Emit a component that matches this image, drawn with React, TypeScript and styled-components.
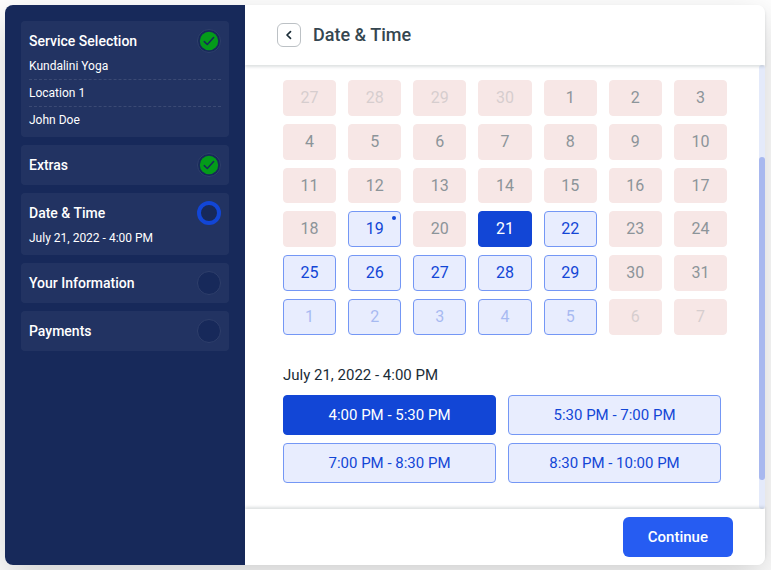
import React from "react";
import styled, { createGlobalStyle, css } from "styled-components";

const navy = "#17295a";
const primary = "#1246d6";

const GlobalStyle = createGlobalStyle`
  *, *::before, *::after { box-sizing: border-box; }
  body {
    margin: 0;
    background: #ffffff;
    font-family: Roboto, "Liberation Sans", sans-serif;
  }
  button { font-family: inherit; margin: 0; cursor: pointer; }
  h1, h2, p, ul { margin: 0; padding: 0; }
`;

const Page = styled.div`
  min-height: 100vh;
  display: flex;
  padding: 5px 6px 5px 5px;
  overflow: hidden;
`;

const Dialog = styled.main`
  flex: 1;
  min-width: 0;
  display: flex;
  border-radius: 8px;
  background: #ffffff;
  box-shadow: 0 14px 40px rgba(0, 0, 0, 0.19);
`;

const Sidebar = styled.nav`
  flex: 0 0 240px;
  display: flex;
  flex-direction: column;
  gap: 8px;
  padding: 16px;
  border-radius: 8px 0 0 8px;
  background: ${navy};
  color: #ffffff;
`;

const StepCard = styled.section<{ $detailed: boolean }>`
  padding: ${(p) => (p.$detailed ? "8px 8px 4px" : "8px")};
  border-radius: 4px;
  background: rgba(255, 255, 255, 0.05);
`;

const StepHeader = styled.div`
  display: flex;
  align-items: center;
  justify-content: space-between;
  height: 24px;
`;

const StepTitle = styled.h2`
  font-size: 14px;
  line-height: 24px;
  font-weight: 500;
`;

const StepDetails = styled.ul`
  list-style: none;
`;

const StepDetail = styled.li`
  font-size: 12px;
  line-height: 26px;

  &:not(:last-child) {
    border-bottom: 1px dashed #3b4a74;
  }
`;

type StepState = "done" | "current" | "pending";

const StateCircle = styled.span<{ $state: StepState }>`
  display: flex;
  align-items: center;
  justify-content: center;
  width: 24px;
  height: 24px;
  border-radius: 50%;
  background: ${navy};
  border: ${(p) => (p.$state === "current" ? `4px solid ${primary}` : "1px solid #2f3f6b")};
`;

const Content = styled.div`
  flex: 1;
  min-width: 0;
  display: flex;
  flex-direction: column;
`;

const Header = styled.header`
  z-index: 1;
  display: flex;
  align-items: center;
  gap: 12px;
  height: 60px;
  padding: 0 32px;
  border-radius: 0 8px 0 0;
  background: #ffffff;
  box-shadow: 0 2px 3px rgba(26, 44, 55, 0.15);
`;

const BackButton = styled.button`
  display: flex;
  align-items: center;
  justify-content: center;
  width: 24px;
  height: 24px;
  padding: 0;
  border: 1px solid #bcc1c5;
  border-radius: 6px;
  background: #ffffff;
  color: #1a2c37;
`;

const Title = styled.h1`
  font-size: 18px;
  line-height: 28px;
  font-weight: 500;
  color: #354650;
`;

const Body = styled.div`
  flex: 1;
  display: flex;
`;

const Scrollable = styled.div`
  flex: 1;
  min-width: 0;
  padding: 15px 32px 26px 38px;
`;

const ScrollTrack = styled.div`
  flex: 0 0 6px;
  display: grid;
  grid-template-rows: 92fr 323fr 29fr;
  border-radius: 3px;
  background: #e4eafa;
`;

const ScrollThumb = styled.div`
  grid-row: 2;
  border-radius: 3px;
  background: #a8b8ef;
`;

const Calendar = styled.div`
  display: grid;
  grid-template-columns: repeat(7, 1fr);
  grid-auto-rows: 1fr;
  gap: 8px 12px;
  aspect-ratio: 444 / 255;
`;

type Tone = "off" | "free" | "selected";

const toneStyles = {
  off: css`
    background: #f7e7e6;
    border-color: #f7e7e6;
    color: #8c9499;
  `,
  free: css`
    background: #e8edfe;
    border-color: #7497f5;
    color: ${primary};
  `,
  selected: css`
    background: ${primary};
    border-color: ${primary};
    color: #ffffff;
  `,
};

const OptionButton = styled.button<{ $tone: Tone }>`
  padding: 0;
  border: 1px solid;
  border-radius: 4px;
  ${(p) => toneStyles[p.$tone]}
`;

const DayButton = styled(OptionButton)`
  position: relative;
  font-size: 16px;
  line-height: 20px;
`;

const DayNumber = styled.span<{ $faded: boolean }>`
  opacity: ${(p) => (p.$faded ? 0.3 : 1)};
`;

const TodayDot = styled.span`
  position: absolute;
  top: 4px;
  right: 4px;
  width: 4px;
  height: 4px;
  border-radius: 50%;
  background: ${primary};
`;

const SlotHeading = styled.p`
  margin-top: 28px;
  font-size: 15px;
  line-height: 24px;
  color: #1a2c37;
`;

const SlotGrid = styled.div`
  display: grid;
  grid-template-columns: repeat(2, 1fr);
  gap: 8px 12px;
  margin: 8px 6px 0 0;
`;

const SlotButton = styled(OptionButton)`
  height: 40px;
  font-size: 15px;
  line-height: 24px;
`;

const Footer = styled.footer`
  z-index: 1;
  display: flex;
  justify-content: flex-end;
  padding: 8px 32px;
  border-radius: 0 0 8px 0;
  background: #ffffff;
  box-shadow: 0 -2px 3px rgba(26, 44, 55, 0.15);
`;

const ContinueButton = styled.button`
  height: 40px;
  padding: 0 25px;
  border: 0;
  border-radius: 6px;
  background: #265cf2;
  color: #ffffff;
  font-size: 15px;
  line-height: 24px;
  font-weight: 500;
`;

interface Step {
  title: string;
  state: StepState;
  details?: string[];
}

const steps: Step[] = [
  { title: "Service Selection", state: "done", details: ["Kundalini Yoga", "Location 1", "John Doe"] },
  { title: "Extras", state: "done" },
  { title: "Date & Time", state: "current", details: ["July 21, 2022 - 4:00 PM"] },
  { title: "Your Information", state: "pending" },
  { title: "Payments", state: "pending" },
];

interface Day {
  day: number;
  tone: Tone;
  faded: boolean;
  today: boolean;
}

const freeDays = [19, 22, 25, 26, 27, 28, 29];

const days: Day[] = [
  ...[27, 28, 29, 30].map((day): Day => ({ day, tone: "off", faded: true, today: false })),
  ...Array.from({ length: 31 }, (_, i): Day => {
    const day = i + 1;
    const tone: Tone = day === 21 ? "selected" : freeDays.includes(day) ? "free" : "off";
    return { day, tone, faded: false, today: day === 19 };
  }),
  ...[1, 2, 3, 4, 5, 6, 7].map((day): Day => ({ day, tone: day < 6 ? "free" : "off", faded: true, today: false })),
];

const slots = ["4:00 PM - 5:30 PM", "5:30 PM - 7:00 PM", "7:00 PM - 8:30 PM", "8:30 PM - 10:00 PM"];

const CheckIcon = () => (
  <svg width="22" height="22" viewBox="0 0 22 22" aria-hidden="true">
    <circle cx="11" cy="11" r="9.2" fill="#049b1a" />
    <path d="M6.3 11.6 9.3 14.5 15.6 7.6" fill="none" stroke={navy} strokeWidth="1.5" strokeLinecap="round" strokeLinejoin="round" />
  </svg>
);

const ChevronLeft = () => (
  <svg width="10" height="10" viewBox="0 0 10 10" aria-hidden="true">
    <path d="M6.5 1.7 3 5l3.5 3.3" fill="none" stroke="currentColor" strokeWidth="1.7" strokeLinecap="round" strokeLinejoin="round" />
  </svg>
);

export default function App() {
  return (
    <>
      <GlobalStyle />
      <Page>
        <Dialog>
          <Sidebar aria-label="Booking steps">
            {steps.map((step) => (
              <StepCard key={step.title} $detailed={Boolean(step.details)}>
                <StepHeader>
                  <StepTitle>{step.title}</StepTitle>
                  <StateCircle $state={step.state}>{step.state === "done" && <CheckIcon />}</StateCircle>
                </StepHeader>
                {step.details && (
                  <StepDetails>
                    {step.details.map((detail) => (
                      <StepDetail key={detail}>{detail}</StepDetail>
                    ))}
                  </StepDetails>
                )}
              </StepCard>
            ))}
          </Sidebar>
          <Content>
            <Header>
              <BackButton type="button" aria-label="Back">
                <ChevronLeft />
              </BackButton>
              <Title>Date &amp; Time</Title>
            </Header>
            <Body>
              <Scrollable>
                <Calendar>
                  {days.map((d, i) => (
                    <DayButton key={i} type="button" $tone={d.tone} disabled={d.tone === "off"}>
                      <DayNumber $faded={d.faded}>{d.day}</DayNumber>
                      {d.today && <TodayDot />}
                    </DayButton>
                  ))}
                </Calendar>
                <SlotHeading>July 21, 2022 - 4:00 PM</SlotHeading>
                <SlotGrid>
                  {slots.map((slot, i) => (
                    <SlotButton key={slot} type="button" $tone={i === 0 ? "selected" : "free"} aria-pressed={i === 0}>
                      {slot}
                    </SlotButton>
                  ))}
                </SlotGrid>
              </Scrollable>
              <ScrollTrack>
                <ScrollThumb />
              </ScrollTrack>
            </Body>
            <Footer>
              <ContinueButton type="button">Continue</ContinueButton>
            </Footer>
          </Content>
        </Dialog>
      </Page>
    </>
  );
}
